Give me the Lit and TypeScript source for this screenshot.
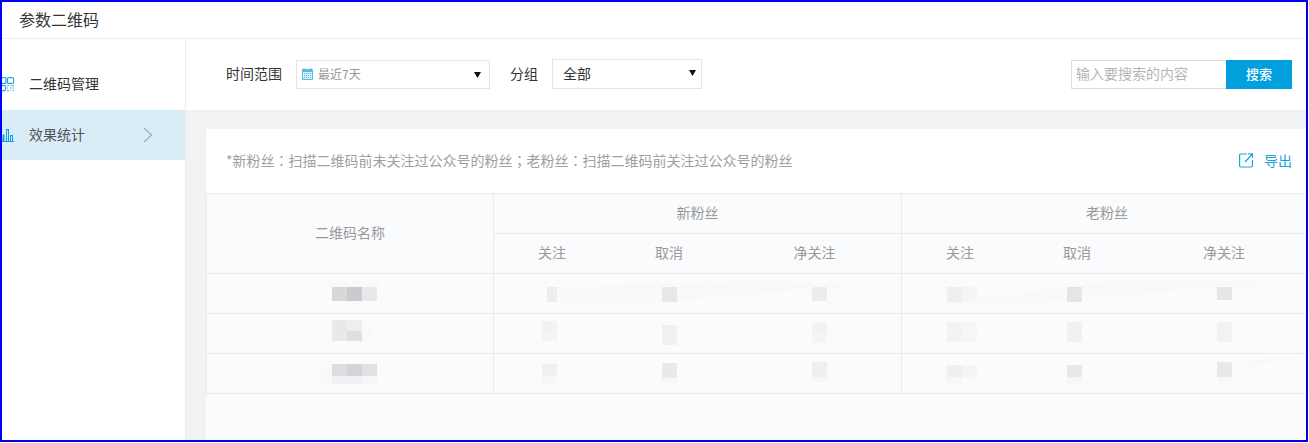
import { LitElement, html, css, svg } from "lit";
import { customElement } from "lit/decorators.js";

interface Strip { h: number; c: string[] }
interface Mosaic { x: number; y: number; w?: number; rows: Strip[] }

const ROWS: Mosaic[][] = [
  [
    { x: 125, y: 13, rows: [{ h: 14, c: ["#d8d8da", "#cbcbcf", "#e8e8ea"] }] },
    { x: 53, y: 13, w: 10, rows: [{ h: 15, c: ["#ededee"] }] },
    { x: 52, y: 13, rows: [{ h: 15, c: ["#e8e8ea"] }] },
    { x: 84, y: 13, rows: [{ h: 14, c: ["#ecedef"] }] },
    { x: 45, y: 13, rows: [{ h: 15, c: ["#efeff0", "#f4f5f6"] }] },
    { x: 49, y: 13, rows: [{ h: 15, c: ["#e5e5e7"] }] },
    { x: 81, y: 13, rows: [{ h: 13, c: ["#e6e6e8"] }] },
  ],
  [
    { x: 125, y: 6, rows: [{ h: 11, c: ["#e9e9eb", "#eeeef0"] }, { h: 10, c: ["#e9e9eb", "#dfdfe3"] }] },
    { x: 48, y: 7, rows: [{ h: 11, c: ["#f2f2f3"] }, { h: 9, c: ["#f4f4f5"] }] },
    { x: 52, y: 11, rows: [{ h: 20, c: ["#f1f1f2"] }] },
    { x: 84, y: 9, rows: [{ h: 11, c: ["#f1f2f3"] }, { h: 9, c: ["#f4f5f5"] }] },
    { x: 45, y: 8, rows: [{ h: 20, c: ["#f3f3f4", "#f6f6f7"] }] },
    { x: 49, y: 8, rows: [{ h: 20, c: ["#f1f1f2"] }] },
    { x: 81, y: 8, rows: [{ h: 20, c: ["#f2f2f3"] }] },
  ],
  [
    { x: 125, y: 10, rows: [{ h: 12, c: ["#dcdde1", "#d4d4d8", "#e0e1e5"] }, { h: 8, c: ["#f0f1f3", "#f0f1f3", "#f6f6f7"] }] },
    { x: 48, y: 10, rows: [{ h: 12, c: ["#f0f0f1"] }, { h: 8, c: ["#f6f7f7"] }] },
    { x: 52, y: 9, rows: [{ h: 15, c: ["#e9e9eb"] }, { h: 5, c: ["#f7f7f8"] }] },
    { x: 84, y: 8, rows: [{ h: 15, c: ["#eeeff1"] }, { h: 5, c: ["#f7f7f8"] }] },
    { x: 45, y: 11, rows: [{ h: 12, c: ["#efeff0", "#f4f5f6"] }, { h: 8, c: ["#f7f7f8", "#fafafb"] }] },
    { x: 49, y: 11, rows: [{ h: 12, c: ["#e7e8ea"] }, { h: 8, c: ["#f6f7f7"] }] },
    { x: 81, y: 8, rows: [{ h: 15, c: ["#e8e9eb"] }, { h: 5, c: ["#f7f7f8"] }] },
  ],
];

const qrIcon = svg`<svg class="nav-icon" width="14" height="16" viewBox="0 0 14 16" fill="none" stroke="#2fa6de" stroke-width="1.200">
  <rect x="-2.500" y="0.600" width="6.500" height="5.800" rx="1"/>
  <rect x="5.500" y="0.600" width="6" height="5.800" rx="1"/>
  <rect x="-2.500" y="8.600" width="6" height="5" rx="1"/>
  <path d="M5 8.600h2M8.500 8.600h3.500M5 11h1M8 11h1.500M10.800 11h1.200M5 13.500h2M8.500 13.500h1M11 13.500h1" stroke-width="1.400" stroke="#72c3e9"/>
</svg>`;

const barIcon = svg`<svg class="nav-icon" width="14" height="16" viewBox="0 0 14 16" fill="none" stroke="#0a9fe0" stroke-width="1">
  <path d="M0 14.500H12"/>
  <rect x="1" y="8" width="1" height="6"/>
  <rect x="4.500" y="2.500" width="2" height="12"/>
  <rect x="8.500" y="8.500" width="2" height="6"/>
</svg>`;

const chevron = svg`<svg class="chevron" width="10" height="16" viewBox="0 0 10 16" fill="none" stroke="#a3a6a9" stroke-width="1.100">
  <path d="M1 1l7.500 7L1 15"/>
</svg>`;

const calendar = svg`<svg class="cal" width="11" height="12" viewBox="0 0 11 12">
  <rect x="0" y="1" width="11" height="11" rx="1" fill="#5bb9e6"/>
  <rect x="1" y="4" width="9" height="7" fill="#d6eef9"/>
  <path d="M2 0v2M9 0v2" stroke="#5bb9e6" stroke-width="1"/>
  <path d="M2 5.500h7M2 7.500h7M2 9.500h7" stroke="#5bb9e6" stroke-width="1" stroke-dasharray="1 1"/>
</svg>`;

const caret = svg`<svg class="caret" width="7" height="6" viewBox="0 0 7 6"><path d="M0 0h7L3.500 6z" fill="#111"/></svg>`;

const exportIcon = svg`<svg class="export-icon" width="14" height="15" viewBox="0 0 14 15" fill="none" stroke="#1aa4dc" stroke-width="1.200">
  <path d="M8 1H1.800A1.200 1.200 0 0 0 .6 2.200v10.600A1.200 1.200 0 0 0 1.800 14h10.400a1.200 1.200 0 0 0 1.200-1.200V7"/>
  <path d="M6 9l7.500-8M9.200 .8h4.300v4.300"/>
</svg>`;

/* Faint brush marks left by the redaction; they sit behind the table, in page coordinates via the viewBox. */
const smears = svg`<svg class="smears" width="1100" height="210" viewBox="206 193 1100 210" fill="#f9f9fa">
  <path d="M557 287C650 283 780 281 842 284L842 288C780 290 700 300 640 304L560 304Z"/>
  <path d="M937 304C1000 300 1050 285 1120 282L1255 281L1255 286C1150 292 1060 300 1000 305Z"/>
  <path d="M1232 364C1260 360 1280 357 1295 357L1293 361L1232 366Z"/>
  <path d="M317 286C330 281 370 281 382 284L377 287L332 287Z"/>
  <path d="M362 322C370 324 373 328 372 332C371 337 367 340 362 341Z"/>
  <path d="M332 363C322 366 316 372 318 378C320 384 326 387 332 386Z"/>
</svg>`;

@customElement("app-root")
export class AppRoot extends LitElement {
  static styles = css`
    :host {
      display: block;
      width: 1308px;
      height: 442px;
      font-family: "Noto Sans CJK SC", "Noto Sans", sans-serif;
      font-size: 14px;
      color: #333;
    }
    .frame {
      box-sizing: border-box;
      width: 100%;
      height: 100%;
      border: 2px solid #0000f0;
      background: #fff;
      overflow: hidden;
      display: flex;
      flex-direction: column;
    }
    .title {
      flex: none;
      height: 36px;
      line-height: 35px;
      padding-left: 17px;
      font-size: 16px;
      border-bottom: 1px solid #eeeeef;
    }
    .body { flex: 1; min-height: 0; display: flex; }
    .side {
      flex: none;
      width: 183px;
      padding-top: 21px;
      border-right: 1px solid #eeeeef;
    }
    .nav {
      height: 50px;
      display: flex;
      align-items: center;
      gap: 13px;
      padding-right: 32px;
    }
    .nav.active { background: #d9edf9; }
    .nav-icon { flex: none; overflow: hidden; }
    .nav span { flex: 1; line-height: 20px; padding-bottom: 4px; }
    .nav.active span { color: #555; padding-bottom: 3px; }
    .main { flex: 1; min-width: 0; display: flex; flex-direction: column; }
    .filters {
      flex: none;
      height: 71px;
      display: flex;
      align-items: center;
      padding: 0 14px 0 40px;
    }
    .lbl { line-height: 20px; padding-bottom: 4px; }
    .select {
      box-sizing: border-box;
      display: flex;
      align-items: center;
      border: 1px solid #e3e3e8;
    }
    .range { width: 194px; height: 29px; margin: 0 20px 0 14px; padding: 0 8px 0 5px; }
    .group { width: 150px; height: 30px; margin: 0 0 1px 14px; padding: 0 5px 0 10px; }
    .cal { flex: none; margin: 0 5px 2px 0; }
    .range span { flex: 1; font-size: 12px; color: #999; padding-bottom: 2px; }
    .group span { flex: 1; color: #333; padding-bottom: 2px; }
    .caret { flex: none; }
    .group .caret { margin-bottom: 2px; }
    .search { margin-left: auto; display: flex; height: 29px; }
    .search-box {
      box-sizing: border-box;
      width: 155px;
      padding-left: 4px;
      line-height: 24px;
      border: 1px solid #ddd;
      border-right: none;
      color: #b5b5b5;
    }
    .search-btn {
      width: 66px;
      text-align: center;
      line-height: 28px;
      background: #009fde;
      color: #fff;
      font-size: 13px;
      font-weight: 500;
    }
    .content {
      flex: 1;
      min-height: 0;
      display: flex;
      padding: 19px 0 0 20px;
      background: #f1f2f4;
    }
    .card {
      flex: 1;
      min-width: 0;
      display: flex;
      flex-direction: column;
      overflow: hidden;
      background: #fff;
    }
    .note {
      flex: none;
      box-sizing: border-box;
      height: 64px;
      display: flex;
      align-items: center;
      justify-content: space-between;
      padding: 0 14px 2px 20px;
      color: #a0a0a0;
      line-height: 20px;
    }
    .punct { font-family: "Noto Sans CJK TC", sans-serif; }
    .export { display: flex; align-items: center; gap: 11px; color: #1aa4dc; }
    .table-wrap { flex: 1; position: relative; background: #fbfbfc; }
    .smears { position: absolute; left: 0; top: 0; pointer-events: none; }
    table {
      position: relative;
      width: 1106px;
      table-layout: fixed;
      border-collapse: separate;
      border-spacing: 0;
      border-top: 1px solid #e8eaec;
      border-left: 1px solid #e8eaec;
    }
    th, td {
      box-sizing: border-box;
      height: 40px;
      padding: 0;
      border-bottom: 1px solid #e8eaec;
    }
    th {
      padding-bottom: 4px;
      background: #fafbfd;
      color: #999;
      font-weight: 400;
      text-align: center;
    }
    td { vertical-align: top; }
    .edge { border-right: 1px solid #e8eaec; }
    .mosaic { display: block; }
    .strip { display: flex; }
    .blk { display: block; flex: none; }
  `;

  private cell(m: Mosaic, edge: boolean) {
    const w = m.w ?? 15;
    return html`<td class=${edge ? "edge" : ""}>
      <span class="mosaic" style="margin:${m.y}px 0 0 ${m.x}px">
        ${m.rows.map(
          (r) => html`<span class="strip">
            ${r.c.map(
              (c) => html`<span class="blk" style="width:${w}px;height:${r.h}px;background:${c}"></span>`
            )}
          </span>`
        )}
      </span>
    </td>`;
  }

  render() {
    return html`<div class="frame">
      <div class="title">参数二维码</div>
      <div class="body">
        <aside class="side">
          <div class="nav">${qrIcon}<span>二维码管理</span></div>
          <div class="nav active">${barIcon}<span>效果统计</span>${chevron}</div>
        </aside>
        <div class="main">
          <div class="filters">
            <span class="lbl">时间范围</span>
            <div class="select range">${calendar}<span>最近7天</span>${caret}</div>
            <span class="lbl">分组</span>
            <div class="select group"><span>全部</span>${caret}</div>
            <div class="search">
              <div class="search-box">输入要搜索的内容</div>
              <div class="search-btn">搜索</div>
            </div>
          </div>
          <div class="content">
            <div class="card">
              <div class="note">
                <span>*新粉丝<span class="punct">：</span>扫描二维码前未关注过公众号的粉丝<span class="punct">；</span>老粉丝<span class="punct">：</span>扫描二维码前关注过公众号的粉丝</span>
                <span class="export">${exportIcon}导出</span>
              </div>
              <div class="table-wrap">
                ${smears}
                <table>
                  <colgroup>
                    <col style="width:287px" /><col style="width:116px" /><col style="width:118px" /><col style="width:174px" />
                    <col style="width:116px" /><col style="width:118px" /><col style="width:176px" />
                  </colgroup>
                  <thead>
                    <tr>
                      <th rowspan="2" class="edge">二维码名称</th>
                      <th colspan="3" class="edge">新粉丝</th>
                      <th colspan="3">老粉丝</th>
                    </tr>
                    <tr>
                      <th>关注</th><th>取消</th><th class="edge">净关注</th>
                      <th>关注</th><th>取消</th><th>净关注</th>
                    </tr>
                  </thead>
                  <tbody>
                    ${ROWS.map(
                      (row) => html`<tr>${row.map((m, i) => this.cell(m, i === 0 || i === 3))}</tr>`
                    )}
                  </tbody>
                </table>
              </div>
            </div>
          </div>
        </div>
      </div>
    </div>`;
  }
}
